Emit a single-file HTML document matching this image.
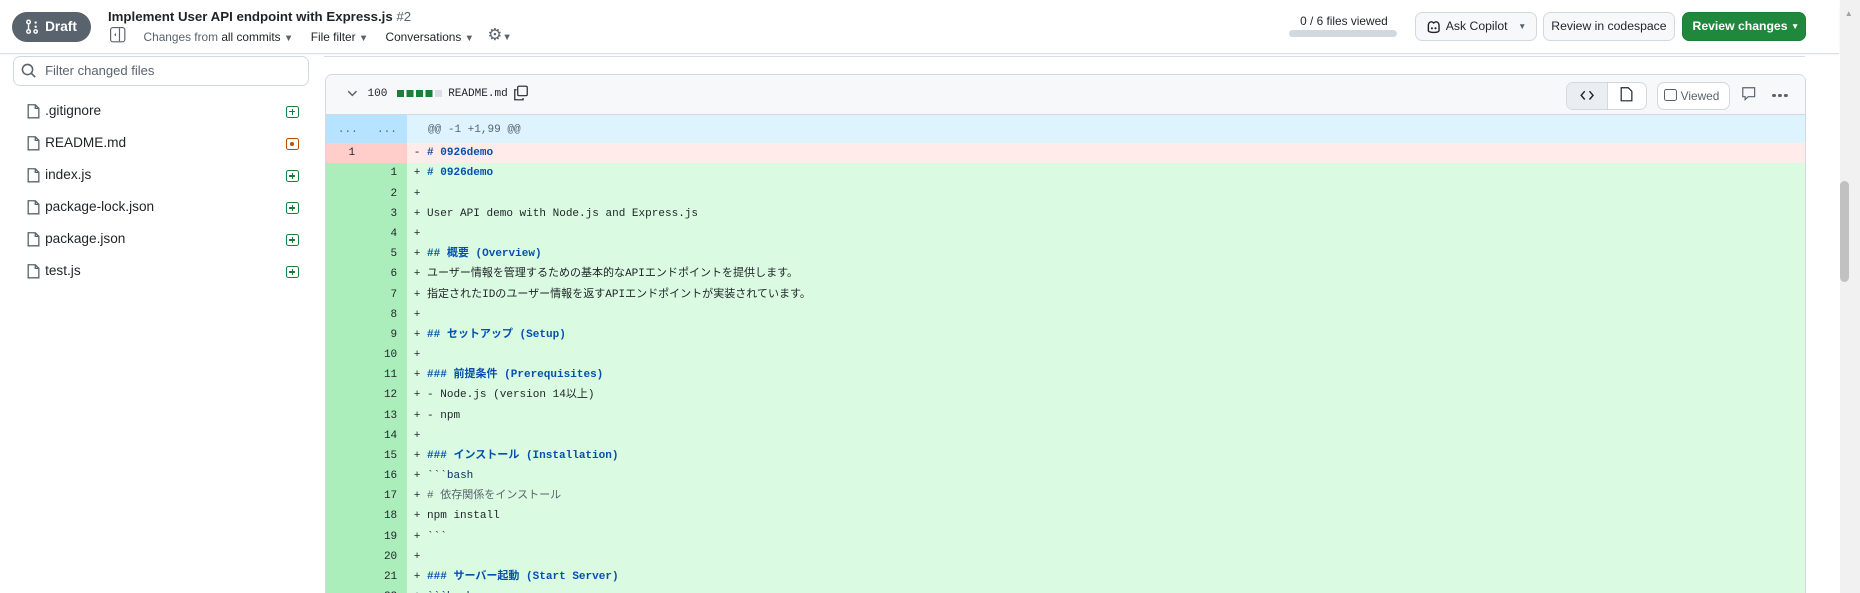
<!DOCTYPE html>
<html><head><meta charset="utf-8"><style>
html,body{margin:0;padding:0;width:1860px;height:593px;overflow:hidden;background:#fff}
#w{position:relative;width:1568px;height:500px;overflow:hidden;zoom:1.18622;font-family:"Liberation Sans","Noto Sans CJK JP",sans-serif;color:#1f2328;font-size:11px}
.a{position:absolute}
.hdr{left:0;top:0;width:1550px;height:45px;background:#fff;border-bottom:1px solid #d8dee4;box-shadow:0 1px 2px rgba(0,0,0,.06)}
.btn{position:absolute;height:23px;border:1px solid #d1d9e0;border-radius:6px;background:#f6f8fa;font-size:10.3px;line-height:23px;box-sizing:content-box;text-align:center;white-space:nowrap}
.file{position:absolute;left:23px;font-size:11.5px;height:16px;line-height:16px}
.file svg{position:absolute;left:0;top:1px}
.file span{position:absolute;left:15px;white-space:nowrap}
.st{position:absolute;left:218px;top:3px;width:9px;height:9px;border:1px solid #1a7f37;border-radius:2px}
.st:before{content:"";position:absolute;left:2px;top:4px;width:5px;height:1px;background:#1a7f37}
.st:after{content:"";position:absolute;left:4px;top:2px;width:1px;height:5px;background:#1a7f37}
.st.m{border-color:#bc4c00}.st.m:before{left:3px;top:3px;width:3px;height:3px;border-radius:2px;background:#bc4c00}.st.m:after{display:none}
.box{left:274px;top:62px;width:1247px;height:450px;border:1px solid #d1d9e0;border-radius:6px}
pre{margin:0;font-family:"Liberation Mono","Noto Sans CJK JP",monospace;font-size:9.3px;line-height:17px;white-space:pre}
.b{color:#0550ae;font-weight:bold}
.gr{color:#59636e}.cb{color:#0a3069}
</style></head><body><div id="w">
<div class="a hdr"></div>
<div class="a" style="left:10px;top:10px;width:67px;height:25px;border-radius:13px;background:#59636e;color:#fff;font-weight:bold;font-size:11.5px;line-height:25px">
<svg class="a" style="left:11px;top:6px" width="12" height="13" viewBox="0 0 12 13"><circle cx="3" cy="2.5" r="1.5" fill="none" stroke="#fff" stroke-width="1.2"/><circle cx="3" cy="10.5" r="1.5" fill="none" stroke="#fff" stroke-width="1.2"/><line x1="3" y1="4" x2="3" y2="9" stroke="#fff" stroke-width="1.2"/><circle cx="9" cy="3" r="1" fill="#fff"/><circle cx="9" cy="6.5" r="1" fill="#fff"/><circle cx="9" cy="10.5" r="1.4" fill="none" stroke="#fff" stroke-width="1.2"/></svg>
<span class="a" style="left:28px">Draft</span></div>
<div class="a" style="left:91px;top:8px;font-size:11.2px;font-weight:bold;white-space:nowrap">Implement User API endpoint with Express.js <span style="font-weight:normal;color:#59636e">#2</span></div>
<svg class="a" style="left:93px;top:23px" width="13" height="13" viewBox="0 0 13 13"><rect x="0.5" y="0.5" width="12" height="12" rx="2" fill="none" stroke="#59636e"/><line x1="8" y1="1" x2="8" y2="12" stroke="#59636e"/><path d="M5 5 L3.5 6.5 L5 8Z" fill="#59636e"/></svg>
<div class="a" style="left:121px;top:25px;font-size:10px;color:#59636e;white-space:nowrap">Changes from <span style="color:#1f2328">all commits</span> <span style="font-size:8px">▼</span></div>
<div class="a" style="left:262px;top:25px;font-size:10px;color:#1f2328;white-space:nowrap">File filter <span style="color:#59636e;font-size:8px">▼</span></div>
<div class="a" style="left:325px;top:25px;font-size:10px;color:#1f2328;white-space:nowrap">Conversations <span style="color:#59636e;font-size:8px">▼</span></div>
<div class="a" style="left:411px;top:21px;font-size:14px;color:#59636e;white-space:nowrap">⚙<span style="font-size:8px">▼</span></div>

<div class="a" style="left:1096px;top:12px;font-size:10px;white-space:nowrap">0 / 6 files viewed</div>
<div class="a" style="left:1087px;top:25px;width:91px;height:6px;border-radius:3px;background:#d1d9e0"></div>
<div class="btn" style="left:1193px;top:10px;width:101px"><svg class="a" style="left:8px;top:6px" width="13" height="12" viewBox="0 0 13 12"><path d="M2 5 C2 1 5 1 6.5 2.5 C8 1 11 1 11 5 V9 C11 11 2 11 2 9 Z" fill="none" stroke="#1f2328" stroke-width="1.2"/><circle cx="5" cy="7" r=".9" fill="#1f2328"/><circle cx="8" cy="7" r=".9" fill="#1f2328"/></svg><span style="position:absolute;left:25px">Ask Copilot</span><span style="position:absolute;left:86px;color:#59636e;font-size:7px">▼</span></div>
<div class="btn" style="left:1301px;top:10px;width:109px">Review in codespace</div>
<div class="btn" style="left:1418px;top:10px;width:103px;background:#1f883d;border-color:#1a7f37;color:#fff;font-weight:bold;text-align:left"><span style="position:absolute;left:8px">Review changes</span><span style="position:absolute;left:91px;font-size:7px">▼</span></div>

<div class="a" style="left:1551px;top:0;width:17px;height:500px;background:#f1f1f1"></div>
<div class="a" style="left:1555px;top:7px;font-size:7px;color:#a3a3a3">▲</div>
<div class="a" style="left:1551px;top:153px;width:8px;height:85px;background:#c1c1c1;border-radius:4px"></div>

<div class="a" style="left:273px;top:47px;width:1249px;height:1px;background:#d8dee4"></div>

<div class="a" style="left:11px;top:47px;width:248px;height:24px;border:1px solid #d1d9e0;border-radius:6px"></div>
<svg class="a" style="left:18px;top:53px" width="13" height="13" viewBox="0 0 13 13"><circle cx="5.5" cy="5.5" r="4.3" fill="none" stroke="#59636e" stroke-width="1.3"/><line x1="8.7" y1="8.7" x2="12" y2="12" stroke="#59636e" stroke-width="1.4"/></svg>
<div class="a" style="left:38px;top:53px;font-size:11px;color:#59636e">Filter changed files</div>

<div class="file" style="top:86px"><svg width="11" height="14" viewBox="0 0 11 14"><path d="M1 1.5 H7 L10 4.5 V12.5 H1 Z M7 1.5 V4.5 H10" fill="none" stroke="#59636e" stroke-width="1.1"/></svg><span>.gitignore</span><i class="st"></i></div>
<div class="file" style="top:113px"><svg width="11" height="14" viewBox="0 0 11 14"><path d="M1 1.5 H7 L10 4.5 V12.5 H1 Z M7 1.5 V4.5 H10" fill="none" stroke="#59636e" stroke-width="1.1"/></svg><span>README.md</span><i class="st m"></i></div>
<div class="file" style="top:140px"><svg width="11" height="14" viewBox="0 0 11 14"><path d="M1 1.5 H7 L10 4.5 V12.5 H1 Z M7 1.5 V4.5 H10" fill="none" stroke="#59636e" stroke-width="1.1"/></svg><span>index.js</span><i class="st"></i></div>
<div class="file" style="top:167px"><svg width="11" height="14" viewBox="0 0 11 14"><path d="M1 1.5 H7 L10 4.5 V12.5 H1 Z M7 1.5 V4.5 H10" fill="none" stroke="#59636e" stroke-width="1.1"/></svg><span>package-lock.json</span><i class="st"></i></div>
<div class="file" style="top:194px"><svg width="11" height="14" viewBox="0 0 11 14"><path d="M1 1.5 H7 L10 4.5 V12.5 H1 Z M7 1.5 V4.5 H10" fill="none" stroke="#59636e" stroke-width="1.1"/></svg><span>package.json</span><i class="st"></i></div>
<div class="file" style="top:221px"><svg width="11" height="14" viewBox="0 0 11 14"><path d="M1 1.5 H7 L10 4.5 V12.5 H1 Z M7 1.5 V4.5 H10" fill="none" stroke="#59636e" stroke-width="1.1"/></svg><span>test.js</span><i class="st"></i></div>

<div class="a box">
<div class="a" style="left:0;top:0;width:1247px;height:33px;background:#f6f8fa;border-bottom:1px solid #d1d9e0;border-radius:6px 6px 0 0"></div>
<svg class="a" style="left:18px;top:13px" width="9" height="6" viewBox="0 0 9 6"><path d="M1 1 L4.5 4.5 L8 1" fill="none" stroke="#59636e" stroke-width="1.2"/></svg>
<div class="a" style="left:35px;top:11px;font-family:'Liberation Mono',monospace;font-size:9.3px">100</div>
<div class="a" style="left:60px;top:13px;width:38px;height:6px;background:repeating-linear-gradient(90deg,#1a7f37 0 6px,transparent 6px 8px)"></div>
<div class="a" style="left:92px;top:13px;width:6px;height:6px;background:#d8dee4"></div>
<div class="a" style="left:103px;top:11px;font-family:'Liberation Mono',monospace;font-size:9.3px">README.md</div>
<svg class="a" style="left:158px;top:9px" width="13" height="14" viewBox="0 0 13 14"><rect x="4" y="1" width="8" height="8" rx="1" fill="none" stroke="#1f2328"/><path d="M3 4 H1.5 V12.5 H8.5 V11" fill="none" stroke="#1f2328"/></svg>
<div class="a" style="left:1045px;top:6px;width:67px;height:22px;border:1px solid #d1d9e0;border-radius:6px;background:#fff"></div>
<div class="a" style="left:1046px;top:7px;width:34px;height:22px;background:#eaeef2;border-radius:5px 0 0 5px;border-right:1px solid #d1d9e0"></div>
<svg class="a" style="left:1057px;top:13px" width="12" height="9" viewBox="0 0 12 9"><path d="M4 1 L1 4.5 L4 8 M8 1 L11 4.5 L8 8" fill="none" stroke="#1f2328" stroke-width="1.2"/></svg>
<svg class="a" style="left:1091px;top:10px" width="11" height="14" viewBox="0 0 11 14"><path d="M1 1.5 H7 L10 4.5 V12.5 H1 Z" fill="none" stroke="#1f2328"/></svg>
<div class="a" style="left:1122px;top:6px;width:60px;height:22px;border:1px solid #d1d9e0;border-radius:6px;background:#fff"></div>
<div class="a" style="left:1128px;top:12px;width:9px;height:9px;border:1px solid #59636e;border-radius:2px"></div>
<div class="a" style="left:1142px;top:12px;font-size:10px;color:#59636e">Viewed</div>
<svg class="a" style="left:1193px;top:10px" width="13" height="13" viewBox="0 0 13 13"><path d="M1.5 1.5 H11.5 V9 H6 L3.5 11.5 V9 H1.5 Z" fill="none" stroke="#59636e"/></svg>
<div class="a" style="left:1219px;top:16px;width:3px;height:3px;border-radius:2px;background:#59636e;box-shadow:5px 0 #59636e,10px 0 #59636e"></div>

<div class="a" style="left:0;top:34px;width:68px;height:24px;background:#b6e3ff"></div>
<div class="a" style="left:68px;top:34px;width:1179px;height:24px;background:#ddf4ff"></div>
<pre class="a gr" style="left:10px;top:38px">...</pre>
<pre class="a gr" style="left:43px;top:38px">...</pre>
<pre class="a gr" style="left:86px;top:38px">@@ -1 +1,99 @@</pre>
<div class="a" style="left:0;top:58px;width:68px;height:17px;background:#ffcecb"></div>
<div class="a" style="left:68px;top:58px;width:1179px;height:17px;background:#ffebe9"></div>
<pre class="a" style="left:19px;top:58px">1</pre>
<pre class="a" style="left:74px;top:58px">- <span class="b"># 0926demo</span></pre>
<div class="a" style="left:0;top:75px;width:68px;height:375px;background:#aceebb"></div>
<div class="a" style="left:68px;top:75px;width:1179px;height:375px;background:#dafbe1"></div>
<pre class="a" style="left:30px;top:75px;width:30px;text-align:right">1
2
3
4
5
6
7
8
9
10
11
12
13
14
15
16
17
18
19
20
21
22</pre>
<pre class="a" style="left:74px;top:75px">+ <span class="b"># 0926demo</span>
+ 
+ User API demo with Node.js and Express.js
+ 
+ <span class="b">## 概要 (Overview)</span>
+ ユーザー情報を管理するための基本的なAPIエンドポイントを提供します。
+ 指定されたIDのユーザー情報を返すAPIエンドポイントが実装されています。
+ 
+ <span class="b">## セットアップ (Setup)</span>
+ 
+ <span class="b">### 前提条件 (Prerequisites)</span>
+ - Node.js (version 14以上)
+ - npm
+ 
+ <span class="b">### インストール (Installation)</span>
+ <span class="cb">&#96;&#96;&#96;bash</span>
+ <span class="gr"># 依存関係をインストール</span>
+ npm install
+ &#96;&#96;&#96;
+ 
+ <span class="b">### サーバー起動 (Start Server)</span>
+ <span class="cb">&#96;&#96;&#96;bash</span></pre>
</div>
</div></body></html>
